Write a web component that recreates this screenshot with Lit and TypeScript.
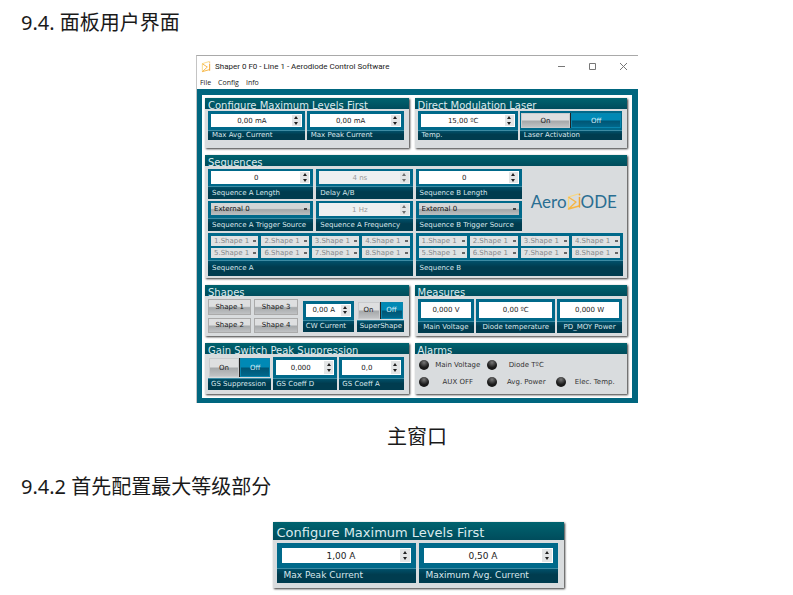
import { LitElement, html, css, svg } from "lit";
import { customElement } from "lit/decorators.js";

const mark = (cls: string) => html`<svg class=${cls} viewBox="0 0 14 18" aria-hidden="true">
  ${svg`<g fill="none" stroke-linejoin="round" stroke-linecap="round">
    <path d="M1.5 15 L1.5 4 L11 1" stroke="#f9d77a" stroke-width="1.3"/>
    <path d="M2 4.5 L9 9 L1.5 16 L12 13" stroke="#f6b544" stroke-width="1.4"/>
    <path d="M12.5 4.5 L12.5 14" stroke="#f3a52f" stroke-width="1.5"/>
    <path d="M12.5 1.5 L12.5 1.6" stroke="#f3a52f" stroke-width="1.8"/>
  </g>`}
</svg>`;

const stepper = (disabled: boolean) => html`<span class="arrows">
  <button class="step up" ?disabled=${disabled} aria-label="Increase"></button>
  <button class="step down" ?disabled=${disabled} aria-label="Decrease"></button>
</span>`;

const spin = (id: string, label: string, value: string, disabled = false) => html`
  <div class="cell">
    <div class="ctl"><div class="spin ${disabled ? "off" : ""}">
      <input id=${id} type="text" .value=${value} ?disabled=${disabled} />${stepper(disabled)}
    </div></div>
    <label class="cap" for=${id}>${label}</label>
  </div>`;

const readout = (id: string, label: string, value: string) => html`
  <div class="cell">
    <div class="ctl"><div class="spin"><input id=${id} type="text" readonly .value=${value} /></div></div>
    <label class="cap" for=${id}>${label}</label>
  </div>`;

const pick = (id: string, label: string) => html`
  <div class="cell">
    <div class="ctl"><select id=${id} class="source"><option>External 0</option></select></div>
    <label class="cap" for=${id}>${label}</label>
  </div>`;

const toggle = (label: string) => html`
  <div class="cell switch" role="group" aria-label=${label}>
    <div class="pair"><button class="btn">On</button><button class="btn lit">Off</button></div>
    <span class="cap">${label}</span>
  </div>`;

const bank = (name: string) => html`
  <div class="cell bank">
    <div class="slots">
      ${[1, 2, 3, 4, 5, 6, 7, 8].map(
        (n) => html`<select disabled aria-label="${name} slot ${n}"><option>${n}.Shape 1</option></select>`
      )}
    </div>
    <span class="cap">${name}</span>
  </div>`;

const alarm = (label: string) => html`<li><i class="led"></i><span>${label}</span></li>`;

@customElement("app-root")
export class AppRoot extends LitElement {
  static styles = css`
    :host {
      display: block;
      background: #fff;
      color: #1a1a1a;
      font-family: "Open Sans", "Noto Sans CJK SC", sans-serif;
    }
    * { box-sizing: border-box; }
    article { padding: 8px 0 4px 21px; }
    h2, figcaption {
      margin: 0;
      font-size: 20px;
      line-height: 30px;
      font-weight: 400;
      font-family: "Noto Sans", "Noto Sans CJK SC", sans-serif;
    }
    figure {
      margin: 17px 0 20px;
      padding-left: 20px;
      display: flex;
      flex-direction: column;
      align-items: center;
    }
    figure.detail { margin: 20px 0 0; padding-left: 22px; }
    figcaption { margin-top: 19px; }
    button, input, select {
      font: inherit;
      color: inherit;
      margin: 0;
      padding: 0;
      border: 0;
      border-radius: 0;
      min-width: 0;
    }
    .window {
      width: 100%;
      max-width: 442px;
      border-top: 1px solid #a9a9a9;
      border-left: 1px solid #c4c4c4;
      background: #fff;
    }
    .title {
      display: flex;
      align-items: center;
      height: 21px;
      padding: 0 9px 0 4px;
      font: 8px/12px Roboto, sans-serif;
      color: #222;
    }
    .title span { flex: 1; }
    .icon { width: 10px; height: 12px; margin-right: 4px; }
    .wbtn { width: 12px; height: 12px; margin-left: 19px; background: none; display: grid; place-items: center; }
    .wbtn svg { width: 9px; height: 9px; }
    .menu {
      display: flex;
      gap: 7px;
      height: 12px;
      padding-left: 3px;
      align-items: center;
      font-size: 7px;
      color: #222;
    }
    .menu button { background: none; line-height: 12px; }
    .frame { background: #00667f; padding: 6px 6px 5px 5px; }
    .board {
      background: #fff;
      padding: 3px 5px 4px 3px;
      display: grid;
      grid-template-columns: 204fr 213fr;
      column-gap: 6px;
      row-gap: 7px;
      font: 7px/10px "DejaVu Sans", sans-serif;
    }
    .wide { grid-column: 1 / -1; }
    .panel {
      background: #d9dcde;
      box-shadow: 1px 1px 2px #333;
      display: flex;
      flex-direction: column;
      font-family: "DejaVu Sans", sans-serif;
      min-width: 0;
    }
    .panel h3 {
      margin: 0;
      height: 11px;
      padding-left: 3px;
      font-size: 10px;
      line-height: 16px;
      font-weight: 400;
      color: #dcebee;
      background: linear-gradient(#00636f, #004c5c);
      white-space: nowrap;
    }
    .body { display: grid; gap: 2px; padding: 2px 5px 8px 3px; }
    .two { grid-template-columns: 1fr 1fr; }
    .cell { display: flex; flex-direction: column; background: #00698a; min-width: 0; }
    .ctl { padding: 3px; flex: 1; display: grid; }
    .cap {
      display: block;
      height: 10px;
      line-height: 9px;
      padding-left: 4px;
      color: #d7e8ee;
      background: linear-gradient(#00506a, #003c4f 40%);
      border-top: 1px solid #3d8ba3;
      white-space: nowrap;
    }
    .spin { display: flex; height: 13px; background: #fff; color: #222; padding: 1px; }
    .spin input { flex: 1; width: 0; text-align: center; background: none; line-height: 10px; }
    .spin.off { background: #eef0f1; color: #999; }
    .spin.off .step { opacity: 0.6; }
    .arrows { display: flex; flex-direction: column; width: 9px; background: #e3e5e6; }
    .step { flex: 1; background: none; display: grid; place-items: center; height: 5px; }
    .step::before { content: ""; border: 2px solid transparent; }
    .up::before { border-top: 0; border-bottom: 3px solid #222; }
    .down::before { border-bottom: 0; border-top: 3px solid #222; }
    select {
      appearance: none;
      background-repeat: no-repeat;
      background-image: linear-gradient(#666, #666);
      background-size: 3px 2px;
      background-position: right 2px center;
    }
    .source {
      height: 12px;
      width: 100%;
      padding-left: 3px;
      color: #111;
      background-image: linear-gradient(#444, #444), linear-gradient(#d3d5d6 45%, #a3a7a9 55%, #bcbfc1);
      background-size: 3px 2px, auto;
      background-position: right 3px center, 0 0;
    }
    .switch { background: #003c4f; }
    .pair { display: flex; gap: 1px; flex: 1; background: #222; border: 1px solid #d9dcde; }
    .btn {
      flex: 1;
      color: #222;
      background: linear-gradient(#dedfe0 45%, #a6a9ab 55%, #c0c2c4);
      border: 1px solid #c9cbcd;
      line-height: 10px;
    }
    .lit { color: #d8f0fa; background: linear-gradient(#0089b5 45%, #005675 55%, #00688c); border-color: #0a86ae; }
    .laser .pair { border-width: 2px 1px; border-color: #00698a; }
    .modul { grid-template-columns: 100fr 102fr; }

    .seq { grid-template-columns: 106fr 97fr 107fr 99fr; gap: 2px 3px; padding: 3px 4px 3px 3px; }
    .seq .ctl { padding: 2px 3px; }
    .seq .cap { height: 13px; line-height: 12px; }
    .seq .cell { height: 30px; }
    .seq .bank { grid-column: span 2; height: 42px; }
    .slots { display: grid; grid-template-columns: repeat(4, 1fr); gap: 2px 3px; padding: 3px 3px 2px; flex: 1; }
    .slots select {
      height: 10px;
      line-height: 10px;
      padding-left: 3px;
      color: #84888b;
      background-color: #dfe2e3;
      opacity: 1;
    }
    .seq .bank .cap { height: 16px; line-height: 15px; }
    .logo {
      grid-column: 4;
      grid-row: 1 / 3;
      display: flex;
      align-items: center;
      justify-content: center;
      padding-top: 4px;
      font: 17px/20px Lato, sans-serif;
      color: #2a6e92;
    }
    .mark { width: 14px; height: 18px; }

    .shapes { display: flex; gap: 3px; padding: 3px 5px 3px 3px; align-items: center; }
    .keys { display: grid; grid-template-columns: 1fr 1fr; gap: 3px; flex: 90; height: 34px; }
    .keys .btn { border: 1px solid #eee; outline: 1px solid #aaa; outline-offset: -1px; }
    .shapes .cell { height: 31px; }
    .shapes .cell .cap, .gain .cap, .meas .cap { height: 12px; line-height: 11px; }
    .shapes .cw { flex: 51; margin-left: 2px; display: grid; }
    .shapes .super { flex: 47; display: grid; }
    .shapes .cap { padding-left: 3px; }

    .meas { grid-template-columns: 57fr 79fr 65fr; padding: 3px 5px 3px 3px; }
    .meas .cell { height: 34px; }
    .meas .spin { height: 16px; }
    .meas .cap { padding: 0; text-align: center; }
    .gain { grid-template-columns: 64fr 65fr 65fr; padding: 3px 5px 4px 3px; }
    .gain .cell { height: 33px; }
    .gain .spin { height: 15px; }
    .gain .cap { padding-left: 3px; }
    .alarms {
      margin: 0;
      padding: 2px 3px 3px 4px;
      list-style: none;
      display: grid;
      grid-template-columns: repeat(3, 1fr);
      grid-auto-rows: 17px;
      color: #333;
    }
    .alarms li { display: flex; align-items: center; }
    .alarms span { flex: 1; text-align: center; white-space: nowrap; }
    .led { width: 10px; height: 10px; border-radius: 50%; background: radial-gradient(circle at 50% 25%, #777, #1c1c1c 55%, #111); }

    .big { width: 100%; max-width: 291px; font-size: 9px; }
    .big h3 { height: 18px; line-height: 22px; font-size: 13px; padding-left: 4px; }
    .big .body { gap: 3px; padding: 3px 6px 5px 4px; }
    .big .cell { height: 40px; }
    .big .ctl { padding: 5px; }
    .big .spin { height: 15px; }
    .big .cap { height: 15px; line-height: 13px; padding-left: 7px; }
    .big .arrows { width: 10px; }
  `;

  render() {
    return html`
      <article>
        <h2>9.4. 面板用户界面</h2>
        <figure>
          <div class="window">
            <div class="title">
              ${mark("icon")}<span>Shaper 0 F0 - Line 1 - Aerodiode Control Software</span>
              <button class="wbtn" aria-label="Minimize"><svg viewBox="0 0 9 9"><path d="M1 4.5h7" stroke="#777" /></svg></button>
              <button class="wbtn" aria-label="Maximize"><svg viewBox="0 0 9 9"><path d="M1.5 1.5h6v6h-6z" fill="none" stroke="#777" /></svg></button>
              <button class="wbtn" aria-label="Close"><svg viewBox="0 0 9 9"><path d="M1 1l7 7M8 1l-7 7" stroke="#777" /></svg></button>
            </div>
            <nav class="menu"><button>File</button><button>Config</button><button>Info</button></nav>
            <div class="frame">
              <div class="board">
                <section class="panel">
                  <h3>Configure Maximum Levels First</h3>
                  <div class="body two">
                    ${spin("avg", "Max Avg. Current", "0,00 mA")} ${spin("peak", "Max Peak Current", "0,00 mA")}
                  </div>
                </section>
                <section class="panel">
                  <h3>Direct Modulation Laser</h3>
                  <div class="body modul laser">${spin("temp", "Temp.", "15,00 ºC")} ${toggle("Laser Activation")}</div>
                </section>
                <section class="panel wide">
                  <h3>Sequences</h3>
                  <div class="body seq">
                    ${spin("alen", "Sequence A Length", "0")} ${spin("delay", "Delay A/B", "4 ns", true)}
                    ${spin("blen", "Sequence B Length", "0")}
                    <div class="logo"><span>Aero</span>${mark("mark")}<span>ODE</span></div>
                    ${pick("atrig", "Sequence A Trigger Source")}
                    ${spin("afreq", "Sequence A Frequency", "1 Hz", true)}
                    ${pick("btrig", "Sequence B Trigger Source")} ${bank("Sequence A")} ${bank("Sequence B")}
                  </div>
                </section>
                <section class="panel">
                  <h3>Shapes</h3>
                  <div class="shapes">
                    <div class="keys">
                      <button class="btn">Shape 1</button><button class="btn">Shape 3</button>
                      <button class="btn">Shape 2</button><button class="btn">Shape 4</button>
                    </div>
                    <div class="cw">${spin("cw", "CW Current", "0,00 A")}</div>
                    <div class="super">${toggle("SuperShape")}</div>
                  </div>
                </section>
                <section class="panel">
                  <h3>Measures</h3>
                  <div class="body meas">
                    ${readout("mv", "Main Voltage", "0,000 V")} ${readout("dt", "Diode temperature", "0,00 ºC")}
                    ${readout("pd", "PD_MOY Power", "0,000 W")}
                  </div>
                </section>
                <section class="panel">
                  <h3>Gain Switch Peak Suppression</h3>
                  <div class="body gain">
                    ${toggle("GS Suppression")} ${spin("gsd", "GS Coeff D", "0,000")} ${spin("gsa", "GS Coeff A", "0,0")}
                  </div>
                </section>
                <section class="panel">
                  <h3>Alarms</h3>
                  <ul class="alarms">
                    ${alarm("Main Voltage")} ${alarm("Diode TºC")}
                    <li></li>
                    ${alarm("AUX OFF")} ${alarm("Avg. Power")} ${alarm("Elec. Temp.")}
                  </ul>
                </section>
              </div>
            </div>
          </div>
          <figcaption>主窗口</figcaption>
        </figure>
        <h2>9.4.2 首先配置最大等级部分</h2>
        <figure class="detail">
          <section class="panel big">
            <h3>Configure Maximum Levels First</h3>
            <div class="body two">
              ${spin("peak2", "Max Peak Current", "1,00 A")} ${spin("avg2", "Maximum Avg. Current", "0,50 A")}
            </div>
          </section>
        </figure>
      </article>
    `;
  }
}
